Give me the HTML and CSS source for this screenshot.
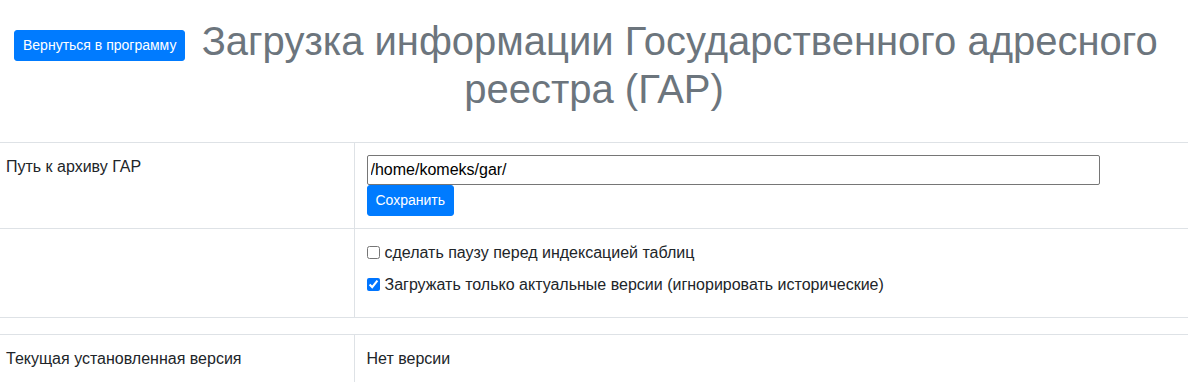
FILE: index.html
```html
<!DOCTYPE html>
<html>
<head lang="ru">
    <meta charset="UTF-8">
    <meta name="viewport" content="width=device-width,initial-scale=1.0">
    <title>Загрузка ГАР</title>
    <link rel="stylesheet" href="styles.css">
</head>
<body>
<div class="header">
    <button class="btn btn-back" type="button">Вернуться в программу</button>
    <h1 class="title">Загрузка информации Государственного адресного реестра (ГАР)</h1>
</div>
<table class="settings">
    <colgroup>
        <col class="col-label">
        <col>
    </colgroup>
    <tr>
        <td class="label">Путь к архиву ГАР</td>
        <td class="value">
            <input class="path-input" type="text" value="/home/komeks/gar/">
            <div><button class="btn" type="button">Сохранить</button></div>
        </td>
    </tr>
    <tr>
        <td class="label"></td>
        <td class="value">
            <label class="check"><input type="checkbox">сделать паузу перед индексацией таблиц</label>
            <label class="check"><input type="checkbox" checked>Загружать только актуальные версии (игнорировать исторические)</label>
        </td>
    </tr>
    <tr class="spacer">
        <td colspan="2"></td>
    </tr>
    <tr>
        <td class="label">Текущая установленная версия</td>
        <td class="value">Нет версии</td>
    </tr>
</table>
</body>
</html>
```

FILE: styles.css
```css
body {
    margin: 0;
    font-family: "Liberation Sans", Arial, sans-serif;
    font-size: 16px;
    line-height: 1.5;
    color: #212529;
    background: #fff;
}

.header {
    padding-top: 17px;
    margin-bottom: 29px;
}

.btn {
    display: inline-block;
    font-family: inherit;
    font-size: 14px;
    line-height: 21px;
    padding: 4px 8px;
    color: #fff;
    background: #007bff;
    border: 1px solid #007bff;
    border-radius: 3px;
    cursor: pointer;
}

.btn-back {
    float: left;
    margin: 13px -14px 0 14px;
}

.title {
    margin: 0;
    font-size: 40px;
    font-weight: 400;
    line-height: 48px;
    color: #6c757d;
    text-align: center;
}

.settings {
    width: 100%;
    border-collapse: collapse;
    table-layout: fixed;
}

.col-label {
    width: 354px;
}

.settings td {
    border-top: 1px solid #dee2e6;
    vertical-align: top;
    padding: 12px;
}

.settings td.label {
    padding-left: 6px;
}

.settings td.value {
    border-left: 1px solid #dee2e6;
}

.path-input {
    display: block;
    box-sizing: border-box;
    width: 733px;
    height: 30px;
    margin: 0;
    padding: 3px 3px;
    font-family: inherit;
    font-size: 16px;
    color: #000;
    border: 1px solid #767676;
    border-radius: 2px;
}

.check {
    display: block;
    margin-bottom: 8px;
}

.check input {
    width: 13px;
    height: 13px;
    margin: 0 5px 0 0;
    vertical-align: -1px;
}

.settings .spacer td {
    padding: 0;
    height: 16px;
}
```
